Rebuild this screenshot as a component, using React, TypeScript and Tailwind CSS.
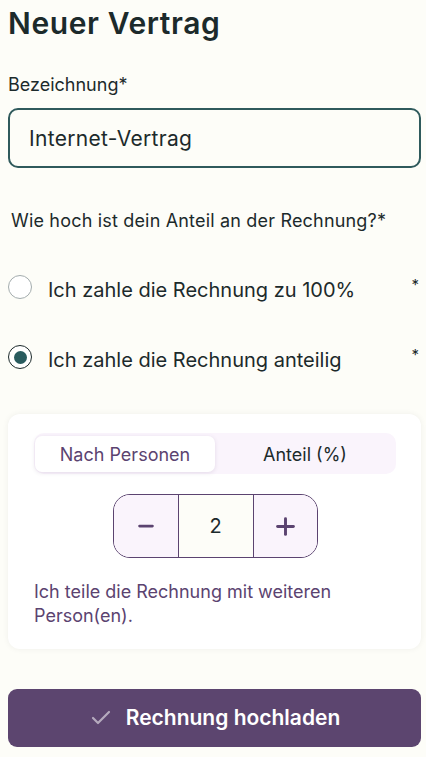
import { useState } from "react";
import { Check, Minus, Plus } from "lucide-react";

const FONT = "font-['Inter','Liberation_Sans',sans-serif]";

export default function App() {
  const [name, setName] = useState("Internet-Vertrag");
  const [mode, setMode] = useState<"full" | "partial">("partial");
  const [tab, setTab] = useState<"persons" | "percent">("persons");
  const [count, setCount] = useState(2);

  return (
    <div className={`${FONT} min-h-screen bg-[#fdfdf8] pl-2 pr-[5px] pt-[5px] text-[#1c2a2b]`}>
      <h1 className="text-[30px] font-semibold leading-[36px] tracking-[0.02em]">
        Neuer Vertrag
      </h1>

      <label className="mt-[32px] block text-[18px] leading-[24px]">Bezeichnung*</label>
      <input
        value={name}
        onChange={(e) => setName(e.target.value)}
        className="mt-[11px] block h-[60px] w-full rounded-[10px] border-2 border-[#2f5a5c] bg-[#fdfdf8] px-[19px] text-[21px] tracking-[0.015em] outline-none"
      />

      <p className="mt-[41px] pl-[3px] text-[18px] leading-[24px] tracking-[0.01em]">
        Wie hoch ist dein Anteil an der Rechnung?*
      </p>

      <div className="mt-[42px] flex flex-col gap-[46px]">
        {[
          { id: "full" as const, label: "Ich zahle die Rechnung zu 100%" },
          { id: "partial" as const, label: "Ich zahle die Rechnung anteilig" },
        ].map((o) => (
          <button
            key={o.id}
            onClick={() => setMode(o.id)}
            className="flex h-[24px] items-center text-left"
          >
            <span
              className={`flex h-[24px] w-[24px] shrink-0 items-center justify-center rounded-full bg-white ${
                mode === o.id
                  ? "border-[1.5px] border-[#1c2a2b]"
                  : "border border-[#a3acad]"
              }`}
            >
              {mode === o.id && (
                <span className="h-[13px] w-[13px] rounded-full bg-[#295b5e]" />
              )}
            </span>
            <span className="ml-4 mt-[6px] whitespace-nowrap text-[20px] leading-[24px]">
              {o.label}
            </span>
            <span className="mb-[6px] ml-auto pr-[2px] text-[15px] leading-none">*</span>
          </button>
        ))}
      </div>

      {mode === "partial" && (
        <div className="mt-[45px] rounded-[12px] bg-white pb-[21px] pl-[26px] pr-[25px] pt-[19px] shadow-[0_0_6px_rgba(0,0,0,0.06)]">
          <div className="flex h-[41px] rounded-[10px] bg-[#faf4fc] px-[1px] pb-[2px] pt-[3px]">
            {[
              { id: "persons" as const, label: "Nach Personen" },
              { id: "percent" as const, label: "Anteil (%)" },
            ].map((t) => (
              <button
                key={t.id}
                onClick={() => setTab(t.id)}
                className={`flex-1 rounded-[7px] text-[18px] ${
                  tab === t.id
                    ? "bg-white text-[#5b4370] shadow-[0_1px_4px_rgba(91,67,112,0.14)]"
                    : "text-[#1c2a2b]"
                }`}
              >
                {t.label}
              </button>
            ))}
          </div>

          <div className="mt-[20px] flex justify-center">
            <div className="flex h-[64px] overflow-hidden rounded-[17px] border border-[#5b4370]">
              <button
                onClick={() => setCount((c) => Math.max(1, c - 1))}
                className="flex w-[64px] items-center justify-center bg-[#faf4fc] text-[#5b4370]"
              >
                <Minus size={22} strokeWidth={3} />
              </button>
              <div className="flex w-[76px] items-center justify-center border-x border-[#5b4370] bg-[#fdfdf8] text-[20px] text-[#1c2a2b]">
                {count}
              </div>
              <button
                onClick={() => setCount((c) => c + 1)}
                className="flex w-[63px] items-center justify-center bg-[#faf4fc] text-[#5b4370]"
              >
                <Plus size={27} strokeWidth={2.6} />
              </button>
            </div>
          </div>

          <p className="mt-[22px] text-[18px] leading-[24px] text-[#5b4370]">
            Ich teile die Rechnung mit weiteren Person(en).
          </p>
        </div>
      )}

      <button className="mt-[40px] flex h-[58px] w-full items-center justify-center gap-[13px] rounded-[9px] bg-[#5c456f] text-[21px] font-semibold text-white">
        <Check size={24} className="text-[#b5aabd]" strokeWidth={2.2} />
        Rechnung hochladen
      </button>
    </div>
  );
}
